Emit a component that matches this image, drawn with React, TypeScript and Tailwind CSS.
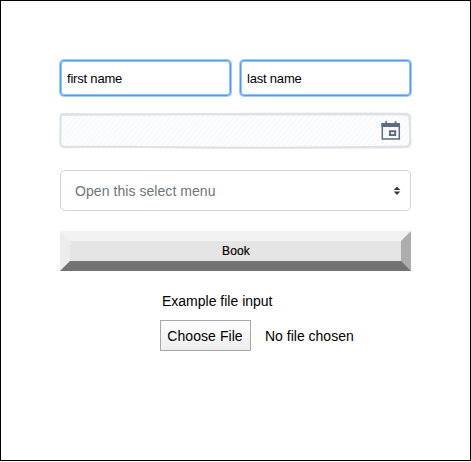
import React from "react";

function NameField({ value }: { value: string }) {
  return (
    <input
      defaultValue={value}
      className="h-9 w-[171px] rounded-[4px] border border-[#4d9bff] bg-white px-1.5 text-[13px] tracking-[-0.2px] text-black shadow-[0_0_0_1px_#a3cbff,inset_0_0_0_1px_#94c3ff] outline-none"
    />
  );
}

function DateField() {
  return (
    <div className="relative mt-[15px] flex h-[40px] w-[355px] -ml-0.5 items-center justify-end pr-3">
      <svg className="absolute inset-0" width="355" height="40" viewBox="0 0 355 40" fill="none">
        <defs>
          <pattern id="hatch" width="4" height="10" patternUnits="userSpaceOnUse" patternTransform="rotate(41)">
            <path d="M1 0V10" stroke="#f1f3f5" strokeWidth="1.1" />
          </pattern>
        </defs>
        <rect x="2" y="3" width="350" height="33" rx="3" fill="url(#hatch)" />
        <path
          d="M5 3.1C90 3.8 130 3 200 2.8S300 2.3 347 2.7Q352 2.8 352.1 6V31Q352 35.5 348 35.5C260 36.4 210 37.3 150 36.7S60 35.6 6 35.6Q2.3 35.5 2.5 32V6Q2.5 3.1 5 3.1Z"
          stroke="#dee2e6" strokeWidth="2"
        />
        <path
          d="M5 4C110 2.8 220 4.2 347 3.7Q351.3 4 351.2 7.5L352.8 31Q352 37 348 36.4C250 37.6 120 35.5 6 36.2Q2.3 36 2.2 32L2.6 7Q2.5 4 5 4Z"
          stroke="#dee2e6" strokeWidth="1.5"
        />
      </svg>
      <svg className="relative" width="20" height="20" viewBox="0 0 20 20" fill="none">
        <path d="M5.2 .3V3M14.6 .3V3" stroke="#5c6b87" strokeWidth="1.8" />
        <path d="M1.3 3H18.3V18H1.3Z" stroke="#5c6b87" strokeWidth="1.5" />
        <path d="M.5 2H19V6H.5Z" fill="#5c6b87" />
        <path d="M8.9 10.3H14.2V14H8.9Z" stroke="#5c6b87" strokeWidth="2" />
      </svg>
    </div>
  );
}

export default function App() {
  return (
    <main className="h-[461px] w-[471px] border border-black bg-white pl-[59px] pt-[59px] font-['Liberation_Sans',Arial,sans-serif] text-black">
      <div className="flex gap-[9px]">
        <NameField value="first name" />
        <NameField value="last name" />
      </div>
      <DateField />
      <button className="mt-[19px] flex h-[41px] w-[351px] items-center justify-between rounded-[5px] border border-[#ced4da] pl-3.5 pr-[9px] pt-px text-left text-sm tracking-[0.06px] text-[#6c757d]">
        <span>Open this select menu</span>
        <svg width="8" height="10" viewBox="0 0 8 10" fill="#343a40">
          <path d="M4 .5L7.3 4H.7ZM4 9L.7 5.5H7.3Z" />
        </svg>
      </button>
      <button className="mt-[20px] flex h-10 w-[351px] items-center justify-center border-10 border-t-[#f2f2f2] border-r-[#adadad] border-b-[#737373] border-l-[#ececec] bg-[#e5e5e5] pl-px text-xs tracking-[0.2px] [-webkit-text-stroke:0.2px_black]">
        Book
      </button>
      <div className="ml-[100px] mt-5 text-sm">
        <label className="ml-0.5 block h-[29px] leading-5">Example file input</label>
        <div className="flex items-center gap-3.5">
          <button className="h-[31px] w-[91px] border border-[#a8a8a8] bg-linear-to-b from-white to-[#ededed] pt-px pr-px tracking-[0.06px]">Choose File</button>
          <span className="pt-px">No file chosen</span>
        </div>
      </div>
    </main>
  );
}
